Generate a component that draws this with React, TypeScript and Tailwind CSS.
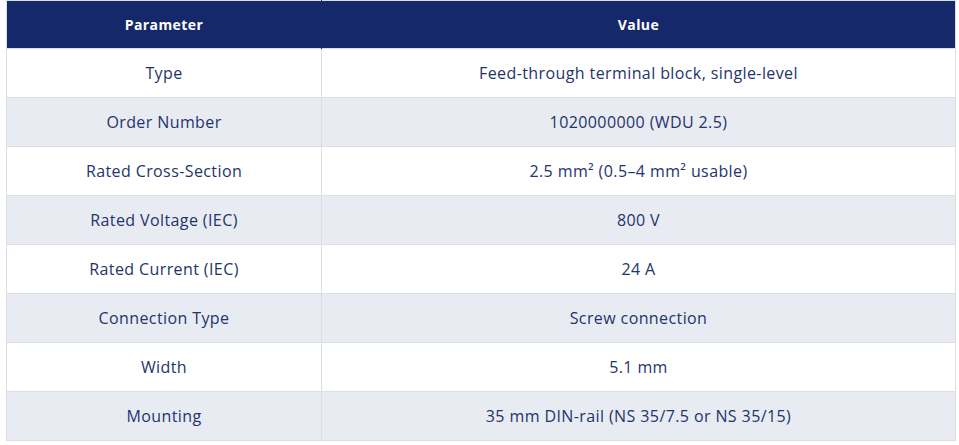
import React from "react";

const rows: [string, string][] = [
  ["Type", "Feed-through terminal block, single-level"],
  ["Order Number", "1020000000 (WDU 2.5)"],
  ["Rated Cross-Section", "2.5 mm² (0.5–4 mm² usable)"],
  ["Rated Voltage (IEC)", "800 V"],
  ["Rated Current (IEC)", "24 A"],
  ["Connection Type", "Screw connection"],
  ["Width", "5.1 mm"],
  ["Mounting", "35 mm DIN-rail (NS 35/7.5 or NS 35/15)"],
];

export default function App() {
  return (
    <div className="w-[959px] h-[445px] bg-white pl-[6px] pr-[3px]" style={{ fontFamily: '"Open Sans", "Liberation Sans", sans-serif' }}>
      <table className="w-[950px] border-collapse border border-[#dcdee3] table-fixed">
        <colgroup>
          <col className="w-[315px]" />
          <col />
        </colgroup>
        <thead>
          <tr className="h-[48px] bg-[#15286a]">
            <th className="text-white text-[14px] font-bold tracking-[0.4px] text-center border-r border-[#15286a]">Parameter</th>
            <th className="text-white text-[14px] font-bold tracking-[0.4px] text-center">Value</th>
          </tr>
        </thead>
        <tbody>
          {rows.map(([p, v], i) => (
            <tr key={p} className={`h-[49px] ${i % 2 === 1 ? "bg-[#e8ebf2]" : "bg-white"}`}>
              <td className="p-0 text-center text-[16px] tracking-[0.4px] text-[#24346b] border border-[#dcdee3]">{p}</td>
              <td className="p-0 text-center text-[16px] tracking-[0.4px] text-[#24346b] border border-[#dcdee3]">{v}</td>
            </tr>
          ))}
        </tbody>
      </table>
    </div>
  );
}
